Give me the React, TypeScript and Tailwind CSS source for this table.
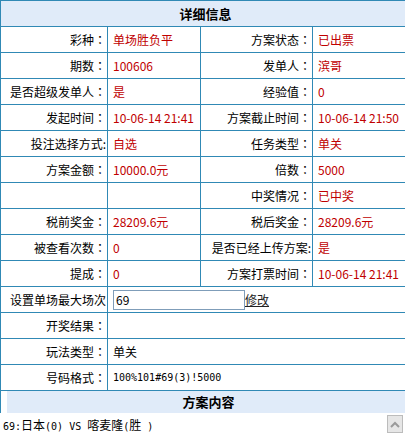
const font = { fontFamily: '"Noto Sans CJK SC", "Noto Sans", sans-serif' };
const mono = { fontFamily: '"DejaVu Sans Mono", monospace', fontSize: "10px" };
const colon = { fontFamily: '"Noto Sans CJK JP", "Noto Sans CJK SC", sans-serif' };

type Cell = { label: string; value?: string };

const rows: [Cell, Cell][] = [
  [{ label: "彩种：", value: "单场胜负平" }, { label: "方案状态：", value: "已出票" }],
  [{ label: "期数：", value: "100606" }, { label: "发单人：", value: "滨哥" }],
  [{ label: "是否超级发单人：", value: "是" }, { label: "经验值：", value: "0" }],
  [{ label: "发起时间：", value: "10-06-14 21:41" }, { label: "方案截止时间：", value: "10-06-14 21:50" }],
  [{ label: "投注选择方式:", value: "自选" }, { label: "任务类型：", value: "单关" }],
  [{ label: "方案金额：", value: "10000.0元" }, { label: "倍数：", value: "5000" }],
  [{ label: "" }, { label: "中奖情况：", value: "已中奖" }],
  [{ label: "税前奖金：", value: "28209.6元" }, { label: "税后奖金：", value: "28209.6元" }],
  [{ label: "被查看次数：", value: "0" }, { label: "是否已经上传方案:", value: "是" }],
  [{ label: "提成：", value: "0" }, { label: "方案打票时间：", value: "10-06-14 21:41" }],
];

const wide: { label: string; value: string }[] = [
  { label: "开奖结果：", value: "" },
  { label: "玩法类型：", value: "单关" },
  { label: "号码格式：", value: "100%101#69(3)!5000" },
];

// full-width colon drawn with a centred glyph, as in the original page
function Label({ text }: { text: string }) {
  if (!text.endsWith("：")) return <>{text}</>;
  return (
    <>
      {text.slice(0, -1)}
      <span style={colon}>：</span>
    </>
  );
}

// ascii runs in a half-width monospace, like the old bitmap font
function Mixed({ text }: { text: string }) {
  const parts = text.match(/[\x20-\x7e]+|[^\x20-\x7e]+/g) || [];
  return (
    <>
      {parts.map((p, i) =>
        /^[\x20-\x7e]+$/.test(p) ? (
          <span key={i} style={mono} className="whitespace-pre">
            {p}
          </span>
        ) : (
          <span key={i}>{p}</span>
        )
      )}
    </>
  );
}

export default function App() {
  return (
    <div className="w-[405px] h-[434px] overflow-hidden bg-white text-[12px] text-black flex flex-col" style={font}>
      <div className="w-[410px] shrink-0 border-l border-[#3089b5]">
        <div className="h-[27px] flex items-center justify-center border-y border-[#3089b5] bg-[#e0ebf9] font-bold text-[13px]">
          详细信息
        </div>

        {rows.map(([a, b], i) => (
          <div key={i} className="h-[26px] flex border-b border-[#3089b5]">
            <div className="w-[107px] shrink-0 border-r border-[#3089b5] flex items-center justify-end pr-[1px] whitespace-nowrap">
              <Label text={a.label} />
            </div>
            <div className="w-[93px] shrink-0 border-r border-[#3089b5] flex items-center pl-[5px] whitespace-nowrap text-[#c00000]">
              {a.value}
            </div>
            <div className="w-[112px] shrink-0 border-r border-[#3089b5] flex items-center justify-end pr-[1px] whitespace-nowrap">
              <Label text={b.label} />
            </div>
            <div className="w-[97px] shrink-0 flex items-center pl-[5px] whitespace-nowrap text-[#c00000]">
              {b.value}
            </div>
          </div>
        ))}

        <div className="h-[26px] flex border-b border-[#3089b5]">
          <div className="w-[107px] shrink-0 border-r border-[#3089b5] flex items-center justify-end pr-[1px] whitespace-nowrap">
            设置单场最大场次
          </div>
          <div className="flex-1 flex items-center pl-[5px]">
            <input
              defaultValue="69"
              className="w-[132px] h-[20px] border border-[#7f9db9] px-[2px] text-[12px] outline-none"
              style={font}
            />
            <a href="#" className="underline text-[#222]">修改</a>
          </div>
        </div>

        {wide.map((r) => (
          <div key={r.label} className="h-[26px] flex border-b border-[#3089b5]">
            <div className="w-[107px] shrink-0 border-r border-[#3089b5] flex items-center justify-end pr-[1px] whitespace-nowrap">
              <Label text={r.label} />
            </div>
            <div className="flex-1 flex items-center pl-[5px] whitespace-nowrap">
              <Mixed text={r.value} />
            </div>
          </div>
        ))}

        <div className="pl-[6px]">
          <div className="h-[22px] flex items-center justify-center bg-[#e0ebf9] font-bold text-[13px]">
            方案内容
          </div>
        </div>
      </div>

      <div className="flex-1 flex items-start justify-between pl-[3px] pr-[2px]">
        <span className="whitespace-nowrap pt-[3px]">
          <Mixed text="69:日本(0) VS 喀麦隆(胜 )" />
        </span>
        <span className="w-[16px] h-[18px] mt-[2px] shrink-0 border border-[#bcbcbc] bg-[#e6e6e6] flex items-center justify-center">
          <svg width="10" height="7" viewBox="0 0 10 7">
            <path d="M1 6 L5 2 L9 6" fill="none" stroke="#9a9a9a" strokeWidth="2" />
          </svg>
        </span>
      </div>
    </div>
  );
}
